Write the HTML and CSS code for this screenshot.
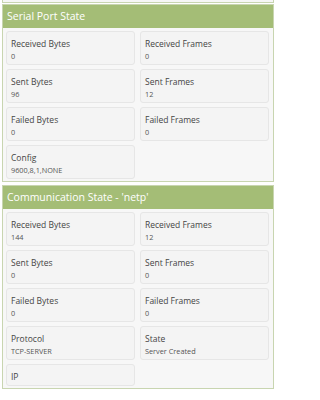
FILE: index.html
```html
<!DOCTYPE html>
<html>
<head>
<meta charset="utf-8">
<link rel="stylesheet" href="styles.css">
</head>
<body>
<div class="page">
<div class="prev-panel"></div>
<section class="panel">
  <div class="panel-head">Serial Port State</div>
  <div class="panel-body">
    <div class="card"><div class="label">Received Bytes</div><div class="value">0</div></div>
    <div class="card"><div class="label">Received Frames</div><div class="value">0</div></div>
    <div class="card"><div class="label">Sent Bytes</div><div class="value">96</div></div>
    <div class="card"><div class="label">Sent Frames</div><div class="value">12</div></div>
    <div class="card"><div class="label">Failed Bytes</div><div class="value">0</div></div>
    <div class="card"><div class="label">Failed Frames</div><div class="value">0</div></div>
    <div class="card"><div class="label">Config</div><div class="value">9600,8,1,NONE</div></div>
  </div>
</section>
<section class="panel">
  <div class="panel-head">Communication State - 'netp'</div>
  <div class="panel-body">
    <div class="card"><div class="label">Received Bytes</div><div class="value">144</div></div>
    <div class="card"><div class="label">Received Frames</div><div class="value">12</div></div>
    <div class="card"><div class="label">Sent Bytes</div><div class="value">0</div></div>
    <div class="card"><div class="label">Sent Frames</div><div class="value">0</div></div>
    <div class="card"><div class="label">Failed Bytes</div><div class="value">0</div></div>
    <div class="card"><div class="label">Failed Frames</div><div class="value">0</div></div>
    <div class="card"><div class="label">Protocol</div><div class="value">TCP-SERVER</div></div>
    <div class="card"><div class="label">State</div><div class="value">Server Created</div></div>
    <div class="card"><div class="label">IP</div></div>
  </div>
</section>
</div>
</body>
</html>
```
FILE: styles.css
```css
html, body {
  margin: 0;
  padding: 0;
  background: #ffffff;
  font-family: "Open Sans", "Liberation Sans", sans-serif;
}
.page {
  width: 272px;
  padding: 0 2px;
}
.prev-panel {
  height: 2px;
  background: #f6f6f6;
  border: 1px solid #c8d5b0;
  border-top: none;
  margin-bottom: 1px;
}
.panel {
  border: 1px solid #c8d5b0;
  background: #f7f7f7;
  margin-bottom: 3px;
}
.panel-head {
  background: #a4bd76;
  color: #ffffff;
  font-size: 10.5px;
  height: 23px;
  line-height: 23px;
  padding: 0 4px;
}
.panel-body {
  display: grid;
  grid-template-columns: 1fr 1fr;
  gap: 4px 5px;
  padding: 3px 4px 2px 3px;
}
.card {
  background: #f4f4f4;
  border: 1px solid #e6e6e6;
  border-radius: 3px;
  padding: 5px 4px 2px;
}
.label {
  font-size: 8.5px;
  color: #444444;
  line-height: 13px;
}
.value {
  font-size: 7.3px;
  color: #555555;
  line-height: 11px;
  margin-top: 1px;
}
```
